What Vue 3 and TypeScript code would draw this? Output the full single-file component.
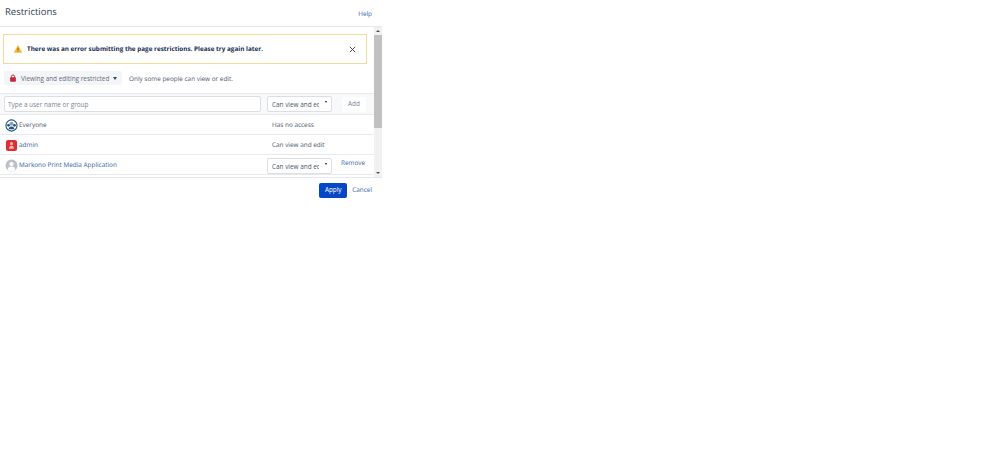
<script setup lang="ts">
interface Row { name: string; kind: string; access: string; select: boolean; link: boolean }
const rows: Row[] = [
  { name: 'Everyone', kind: 'everyone', access: 'Has no access', select: false, link: false },
  { name: 'admin', kind: 'admin', access: 'Can view and edit', select: false, link: true },
  { name: 'Markono Print Media Application', kind: 'app', access: 'Can view and edit', select: true, link: true },
]
</script>

<template>
  <div class="dialog">
    <header class="head">
      <h2>Restrictions</h2>
      <a class="link help">Help</a>
    </header>
    <div class="middle">
      <div class="content">
        <div class="warning">
          <svg class="warn-icon" viewBox="0 0 10 10" width="8" height="8">
            <path d="M5 .8 9.6 9.2H.4Z" fill="#f5b73b" stroke="#f5b73b" stroke-linejoin="round" />
            <rect x="4.5" y="3.4" width="1" height="3.2" fill="#5c4a1f" />
            <rect x="4.5" y="7.2" width="1" height="1" fill="#5c4a1f" />
          </svg>
          <strong>There was an error submitting the page restrictions. Please try again later.</strong>
          <svg class="close" viewBox="0 0 8 8" width="7" height="7">
            <path d="M1 1 7 7M7 1 1 7" stroke="#333" stroke-width="1" fill="none" />
          </svg>
        </div>
        <div class="mode">
          <button class="mode-btn">
            <svg viewBox="0 0 10 10" width="8" height="8">
              <path d="M3 5V3.2a2 2 0 0 1 4 0V5" stroke="#c9243a" fill="none" stroke-width="1.2" />
              <rect x="1.4" y="4.2" width="7.2" height="5.4" rx="1" fill="#c9243a" />
            </svg>
            <span>Viewing and editing restricted</span>
            <i class="caret"></i>
          </button>
          <span class="hint">Only some people can view or edit.</span>
        </div>
        <div class="adder">
          <input class="who" placeholder="Type a user name or group" />
          <div class="select-wrap"><select class="select"><option>Can view and edit</option></select><i class="caret dark"></i></div>
          <button class="add">Add</button>
        </div>
        <div v-for="row in rows" :key="row.name" class="row">
          <div class="person">
            <svg v-if="row.kind === 'everyone'" class="avatar" viewBox="0 0 14 14">
              <circle cx="7" cy="7" r="6" fill="#fff" stroke="#24527f" stroke-width="1.2" />
              <circle cx="7" cy="5.2" r="2.2" fill="#7fa3c7" />
              <circle cx="3.8" cy="6.8" r="1.5" fill="#24527f" />
              <circle cx="10.2" cy="6.8" r="1.5" fill="#24527f" />
              <path d="M4 11a3 3 0 0 1 6 0Z" fill="#24527f" />
            </svg>
            <svg v-else-if="row.kind === 'admin'" class="avatar" viewBox="0 0 14 14">
              <rect x="1" y="1" width="12" height="12" rx="2.5" fill="#dc2f34" />
              <circle cx="7" cy="5" r="1.7" fill="#f6b9b5" />
              <path d="M4.4 10.4a2.6 3 0 0 1 5.2 0Z" fill="#f6b9b5" />
            </svg>
            <svg v-else class="avatar" viewBox="0 0 14 14">
              <circle cx="7" cy="7" r="6.4" fill="#bcbfc5" />
              <circle cx="7" cy="5.5" r="2.3" fill="#fff" />
              <path d="M2.9 11.6a4.1 3.6 0 0 1 8.2 0 6 6 0 0 1-8.2 0Z" fill="#fff" />
            </svg>
            <a :class="{ link: row.link }">{{ row.name }}</a>
          </div>
          <div v-if="row.select" class="select-wrap"><select class="select"><option>{{ row.access }}</option></select><i class="caret dark"></i></div>
          <span v-else class="access">{{ row.access }}</span>
          <a v-if="row.select" class="link remove">Remove</a>
        </div>
      </div>
      <div class="scrollbar">
        <i class="arrow up"></i>
        <div class="track"><div class="thumb"></div></div>
        <i class="arrow down"></i>
      </div>
    </div>
    <footer class="foot">
      <button class="apply">Apply</button>
      <a class="link">Cancel</a>
    </footer>
  </div>
</template>

<style>
html, body { background: #fff; }
</style>

<style scoped>
.dialog {
  width: 382px;
  font-family: "Open Sans", "Noto Sans", sans-serif;
  font-size: 6.4px;
  line-height: 10px;
  color: #4a5568;
  text-rendering: geometricPrecision;
}
.head {
  height: 27px;
  display: flex;
  justify-content: space-between;
  box-sizing: border-box;
  padding: 6px 10px 0 5px;
  border-bottom: 1px solid #e6e7ea;
}
h2 {
  margin: 0;
  font-size: 9.5px;
  line-height: 12px;
  font-weight: 500;
  color: #344054;
}
.help { margin-top: 3px; }
.link { color: #2f62a3; }
.middle { display: flex; height: 150px; border-bottom: 1px solid #e6e7ea; }
.content { width: 374px; overflow: hidden; }
.warning {
  box-sizing: border-box;
  width: 364px;
  height: 30px;
  margin: 7px 0 0 3px;
  padding: 0 10px;
  display: flex;
  align-items: center;
  border: 1px solid #f2dc9a;
  color: #172b4d;
}
.warning strong { margin-left: 5px; font-weight: 700; flex: 1; font-size: 6.35px; }
.warn-icon { flex: none; }
.mode { display: flex; align-items: center; margin: 7px 0 0 4px; height: 14px; }
.mode-btn {
  height: 14px;
  width: 118px;
  padding: 1px 0 0 5px;
  display: flex;
  align-items: center;
  gap: 4px;
  border: 0;
  border-radius: 2px;
  background: #f4f5f7;
  font: inherit;
  color: #5f6b7c;
  white-space: nowrap;
}
.mode-btn svg { margin-top: -2px; }
.hint { margin: 1px 0 0 7px; }
.caret {
  width: 0;
  height: 0;
  border: 2px solid transparent;
  border-top: 3px solid #344563;
  border-bottom: 0;
}
.adder {
  display: flex;
  align-items: center;
  height: 22px;
  margin-top: 8px;
  padding: 0 8px 0 4px;
  background: #f8f9fa;
  border-top: 1px solid #e8e9ec;
  border-bottom: 1px solid #e8e9ec;
  box-sizing: border-box;
}
.who {
  width: 257px;
  height: 16px;
  box-sizing: border-box;
  padding: 0 3px;
  border: 1px solid #dcdee2;
  border-radius: 2px;
  font: inherit;
  color: #4a5568;
  outline: 0;
}
.who::placeholder { color: #7a8494; opacity: 1; }
.select-wrap { position: relative; width: 65px; height: 16px; flex: none; }
.select {
  appearance: none;
  display: block;
  box-sizing: border-box;
  width: 65px;
  height: 16px;
  margin: 0;
  padding: 2px 12px 0 4px;
  background: #fff;
  border: 1px solid #dcdee2;
  border-radius: 2px;
  font: inherit;
  color: #4a5568;
  outline: 0;
}
.select-wrap .caret { position: absolute; right: 5px; top: 5px; border-width: 1.5px; border-top-width: 2.5px; border-bottom: 0; border-top-color: #111; }
.adder .select-wrap { margin-left: 6px; }
.add {
  width: 24px;
  height: 15px;
  margin-left: 10px;
  padding: 0;
  border: 0;
  border-radius: 2px;
  background: #fff;
  font: inherit;
  color: #7a8494;
}
.row {
  height: 20px;
  display: flex;
  align-items: center;
  box-sizing: border-box;
  padding-top: 1px;
  border-bottom: 1px solid #e8e9ec;
}
.person { width: 272px; padding-left: 5px; box-sizing: border-box; display: flex; align-items: center; gap: 1px; }
.avatar { width: 13px; height: 13px; flex: none; }
.remove { margin: -5px 0 0 9px; }
.row .select-wrap { margin: 1px 0 0 -5px; }
.scrollbar {
  width: 8px;
  display: flex;
  flex-direction: column;
  align-items: center;
  background: #f1f1f1;
}
.track { flex: 1; width: 100%; }
.thumb { height: 93px; background: #c1c1c1; }
.arrow { width: 0; height: 0; margin: 3px 0; border: 2px solid transparent; }
.arrow.up { border-top: 0; border-bottom: 2px solid #505050; }
.arrow.down { border-bottom: 0; border-top: 2px solid #505050; }
.foot {
  display: flex;
  justify-content: flex-end;
  align-items: center;
  gap: 5px;
  height: 26px;
  margin-top: -1px;
  padding-right: 10px;
  box-sizing: border-box;
}
.apply {
  width: 28px;
  height: 15px;
  padding: 0;
  border: 0;
  border-radius: 2px;
  background: #0747c6;
  color: #fff;
  font: inherit;
}
</style>
